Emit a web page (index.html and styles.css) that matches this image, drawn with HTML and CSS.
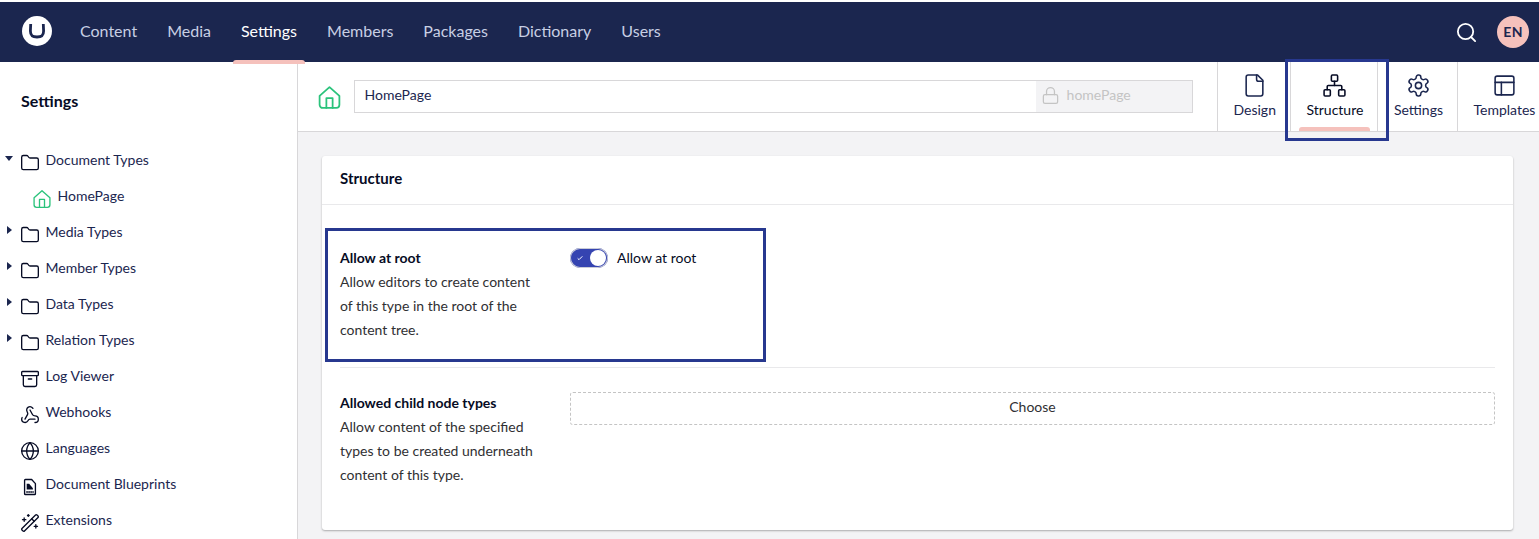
FILE: index.html
```html
<!DOCTYPE html>
<html lang="en">
<head>
<meta charset="utf-8">
<title>Settings</title>
<link rel="stylesheet" href="styles.css">
</head>
<body>
<svg class="sprite" aria-hidden="true">
  <symbol id="i-folder" viewBox="0 0 24 24"><path d="M20 20a2 2 0 0 0 2-2V8a2 2 0 0 0-2-2h-7.9a2 2 0 0 1-1.69-.9L9.6 3.9A2 2 0 0 0 7.93 3H4a2 2 0 0 0-2 2v13a2 2 0 0 0 2 2Z"/></symbol>
  <symbol id="i-home" viewBox="0 0 24 24"><path d="M2.500 10.500 12 2l9.500 8.500V19a3 3 0 0 1-3 3h-13a3 3 0 0 1-3-3Z"/><path d="M9 22v-9.500h6V22"/></symbol>
  <symbol id="i-search" viewBox="0 0 24 24"><circle cx="11" cy="11" r="8"/><path d="m21 21-4.300-4.300"/></symbol>
  <symbol id="i-file" viewBox="0 0 24 24"><path d="M15 2H6a2 2 0 0 0-2 2v16a2 2 0 0 0 2 2h12a2 2 0 0 0 2-2V7Z"/><path d="M14 2v4a2 2 0 0 0 2 2h4"/></symbol>
  <symbol id="i-network" viewBox="0 0 24 24"><rect x="9" y="2" width="6" height="6" rx="1"/><rect x="16" y="16" width="6" height="6" rx="1"/><rect x="2" y="16" width="6" height="6" rx="1"/><path d="M5 16v-3a1 1 0 0 1 1-1h12a1 1 0 0 1 1 1v3"/><path d="M12 12V8"/></symbol>
  <symbol id="i-gear" viewBox="0 0 24 24"><path d="M12.220 2h-.44a2 2 0 0 0-2 2v.18a2 2 0 0 1-1 1.730l-.43.25a2 2 0 0 1-2 0l-.15-.08a2 2 0 0 0-2.730.73l-.22.38a2 2 0 0 0 .73 2.730l.15.1a2 2 0 0 1 1 1.720v.51a2 2 0 0 1-1 1.740l-.15.09a2 2 0 0 0-.73 2.730l.22.38a2 2 0 0 0 2.730.73l.15-.08a2 2 0 0 1 2 0l.43.25a2 2 0 0 1 1 1.730V20a2 2 0 0 0 2 2h.44a2 2 0 0 0 2-2v-.18a2 2 0 0 1 1-1.730l.43-.25a2 2 0 0 1 2 0l.15.08a2 2 0 0 0 2.730-.73l.22-.39a2 2 0 0 0-.73-2.730l-.15-.08a2 2 0 0 1-1-1.740v-.5a2 2 0 0 1 1-1.740l.15-.09a2 2 0 0 0 .73-2.730l-.22-.38a2 2 0 0 0-2.730-.73l-.15.08a2 2 0 0 1-2 0l-.43-.25a2 2 0 0 1-1-1.730V4a2 2 0 0 0-2-2z"/><circle cx="12" cy="12" r="3"/></symbol>
  <symbol id="i-layout" viewBox="0 0 24 24"><rect x="3" y="3" width="18" height="18" rx="2"/><path d="M3 9h18"/><path d="M9 21V9"/></symbol>
  <symbol id="i-lock" viewBox="0 0 24 24"><rect x="3" y="11" width="18" height="11" rx="2"/><path d="M7 11V7a5 5 0 0 1 10 0v4"/></symbol>
  <symbol id="i-archive" viewBox="0 0 24 24"><rect x="2" y="3" width="20" height="5" rx="1"/><path d="M4 8v11a2 2 0 0 0 2 2h12a2 2 0 0 0 2-2V8"/><path d="M10 12h4"/></symbol>
  <symbol id="i-webhook" viewBox="0 0 24 24"><path d="M18 16.980h-5.990c-1.100 0-1.950.94-2.480 1.900A4 4 0 0 1 2 17c.01-.7.2-1.400.57-2"/><path d="m6 17 3.130-5.780c.53-.97.1-2.180-.5-3.100a4 4 0 1 1 6.890-4.060"/><path d="m12 6 3.130 5.730C15.660 12.700 16.900 13 18 13a4 4 0 0 1 0 8"/></symbol>
  <symbol id="i-globe" viewBox="0 0 24 24"><circle cx="12" cy="12" r="10"/><path d="M12 2a14.500 14.500 0 0 0 0 20 14.500 14.500 0 0 0 0-20"/><path d="M2 12h20"/></symbol>
  <symbol id="i-blueprint" viewBox="0 0 24 24"><path d="M14 3H6.500a1 1 0 0 0-1 1v16a1 1 0 0 0 1 1h11a1 1 0 0 0 1-1V8Z"/><path class="solid" d="M8 8h3l4.500 5.500V15H8Z"/><path d="M8 18h8" stroke-dasharray="1 1.500"/></symbol>
  <symbol id="i-wand" viewBox="0 0 24 24"><path d="m21.640 3.640-1.280-1.280a1.210 1.210 0 0 0-1.720 0L2.360 18.640a1.210 1.210 0 0 0 0 1.720l1.280 1.280a1.200 1.200 0 0 0 1.720 0L21.640 5.360a1.200 1.200 0 0 0 0-1.720"/><path d="m14 7 3 3"/><path d="M5 6v4"/><path d="M19 14v4"/><path d="M10 2v2"/><path d="M7 8H3"/><path d="M21 16h-4"/><path d="M11 3H9"/></symbol>
</svg>

<header class="topbar">
  <div class="logo">
    <svg viewBox="0 0 30 30" class="logo-mark"><circle cx="15" cy="15" r="15" class="logo-disc"/><path d="M8.700 8 8.400 15c0 5 2.400 6 6.600 6s6.600-1 6.600-6L21.300 8" class="logo-u"/></svg>
  </div>
  <nav class="mainnav">
    <a class="mainnav-item">Content</a>
    <a class="mainnav-item">Media</a>
    <a class="mainnav-item is-active">Settings</a>
    <a class="mainnav-item">Members</a>
    <a class="mainnav-item">Packages</a>
    <a class="mainnav-item">Dictionary</a>
    <a class="mainnav-item">Users</a>
  </nav>
  <div class="topbar-tools">
    <svg class="icon icon-search"><use href="#i-search"/></svg>
    <div class="avatar">EN</div>
  </div>
</header>

<div class="shell">
  <aside class="sidebar">
    <h2 class="sidebar-title">Settings</h2>
    <ul class="tree">
      <li class="tree-row"><span class="caret caret-open"></span><svg class="icon tree-icon"><use href="#i-folder"/></svg><span>Document Types</span></li>
      <li class="tree-row tree-child"><svg class="icon tree-icon icon-green"><use href="#i-home"/></svg><span>HomePage</span></li>
      <li class="tree-row"><span class="caret"></span><svg class="icon tree-icon"><use href="#i-folder"/></svg><span>Media Types</span></li>
      <li class="tree-row"><span class="caret"></span><svg class="icon tree-icon"><use href="#i-folder"/></svg><span>Member Types</span></li>
      <li class="tree-row"><span class="caret"></span><svg class="icon tree-icon"><use href="#i-folder"/></svg><span>Data Types</span></li>
      <li class="tree-row"><span class="caret"></span><svg class="icon tree-icon"><use href="#i-folder"/></svg><span>Relation Types</span></li>
      <li class="tree-row"><svg class="icon tree-icon"><use href="#i-archive"/></svg><span>Log Viewer</span></li>
      <li class="tree-row"><svg class="icon tree-icon"><use href="#i-webhook"/></svg><span>Webhooks</span></li>
      <li class="tree-row"><svg class="icon tree-icon"><use href="#i-globe"/></svg><span>Languages</span></li>
      <li class="tree-row"><svg class="icon tree-icon"><use href="#i-blueprint"/></svg><span>Document Blueprints</span></li>
      <li class="tree-row"><svg class="icon tree-icon"><use href="#i-wand"/></svg><span>Extensions</span></li>
    </ul>
  </aside>

  <div class="workspace">
    <div class="ws-header">
      <svg class="icon ws-icon icon-green"><use href="#i-home"/></svg>
      <div class="name-field">
        <span class="name-value">HomePage</span>
        <span class="alias"><svg class="icon alias-lock"><use href="#i-lock"/></svg>homePage</span>
      </div>
      <nav class="tabs">
        <a class="tab"><svg class="icon tab-icon"><use href="#i-file"/></svg>Design</a>
        <a class="tab is-active"><svg class="icon tab-icon"><use href="#i-network"/></svg>Structure<span class="callout callout-tab"></span></a>
        <a class="tab"><svg class="icon tab-icon"><use href="#i-gear"/></svg>Settings</a>
        <a class="tab"><svg class="icon tab-icon"><use href="#i-layout"/></svg>Templates</a>
      </nav>
    </div>

    <main class="ws-main">
      <section class="box">
        <h3 class="box-title">Structure</h3>
        <div class="box-body">
          <div class="prop">
            <div class="prop-label">
              <strong>Allow at root</strong>
              <p>Allow editors to create content of this type in the root of the content tree.</p>
            </div>
            <div class="toggle-wrap">
              <span class="toggle">
                <svg class="toggle-check" viewBox="0 0 24 24"><path d="M5 13l4 4L19 7"/></svg>
                <span class="toggle-knob"></span>
              </span>
              <span>Allow at root</span>
            </div>
            <span class="callout callout-prop"></span>
          </div>
          <div class="prop prop-last">
            <div class="prop-label">
              <strong>Allowed child node types</strong>
              <p>Allow content of the specified types to be created underneath content of this type.</p>
            </div>
            <div class="prop-control">
              <button class="choose">Choose</button>
            </div>
          </div>
        </div>
      </section>
    </main>
  </div>
</div>
</body>
</html>
```

FILE: styles.css
```css
* { box-sizing: border-box; }
html, body { margin: 0; height: 100%; overflow: hidden; }
body {
  padding-top: 2px;
  background: #fff;
  color: #1b264f;
  font: 14px/24px "Lato", "Liberation Sans", sans-serif;
  display: flex;
  flex-direction: column;
  width: 1539px;
  height: 539px;
}
.sprite { position: absolute; width: 0; height: 0; overflow: hidden; }
.icon { display: block; fill: none; stroke: currentColor; stroke-width: 1.75; stroke-linecap: round; stroke-linejoin: round; flex: none; }
.icon-green { color: #2bc37c; }
.solid { fill: currentColor; stroke: none; }

.topbar { height: 60px; flex: none; background: #1b264f; display: flex; align-items: center; padding: 0 10px 0 22px; }
.logo { width: 30px; height: 30px; flex: none; margin-top: -2px; }
.logo-mark { display: block; width: 30px; height: 30px; }
.logo-disc { fill: #fff; }
.logo-u { fill: none; stroke: #1b264f; stroke-width: 2.8; stroke-linecap: butt; }
.mainnav { display: flex; align-self: stretch; margin-left: 13px; }
.mainnav-item { position: relative; display: flex; align-items: center; padding: 0 15px; font-size: 16px; color: #c8cfe4; margin-top: -2px; }
.mainnav-item.is-active { color: #fff; }
.mainnav-item.is-active::after { content: ""; position: absolute; left: 7px; right: 7px; bottom: -2px; height: 4px; background: #f5c1bc; border-radius: 3px 3px 0 0; }
.topbar-tools { margin-left: auto; display: flex; align-items: center; gap: 19px; }
.icon-search { width: 23px; height: 23px; color: #fff; stroke-width: 1.9; margin-top: 1px; }
.avatar { width: 32px; height: 32px; border-radius: 50%; background: #f5c1bc; display: flex; align-items: center; justify-content: center; font-size: 14px; font-weight: 700; letter-spacing: .3px; color: #1b264f; }

.shell { flex: 1; display: flex; min-height: 0; }
.sidebar { width: 298px; flex: none; border-right: 1px solid #d8d7d9; overflow: hidden; }
.sidebar-title { margin: 0; padding: 27px 0 0 21px; font-size: 16px; line-height: 24px; font-weight: 700; color: #060b24; height: 80px; }
.tree { list-style: none; margin: 0; padding: 0; }
.tree-row { position: relative; height: 36px; display: flex; align-items: center; padding-left: 45.500px; color: #1b264f; }
.tree-child { padding-left: 57.500px; }
.tree-icon { position: absolute; left: 20px; top: 11px; width: 20px; height: 20px; color: #060b24; stroke-width: 1.6; }
.tree-child .tree-icon { left: 32px; top: 11px; color: #2bc37c; }
.caret { position: absolute; left: 7px; top: 12px; width: 0; height: 0; border-top: 4px solid transparent; border-bottom: 4px solid transparent; border-left: 5px solid #1b264f; }
.caret-open { left: 5px; top: 14px; border-left: 4px solid transparent; border-right: 4px solid transparent; border-top: 5px solid #1b264f; border-bottom: 0; }

.workspace { flex: 1; min-width: 0; display: flex; flex-direction: column; background: #f3f3f5; }
.ws-header { height: 70px; flex: none; display: flex; align-items: stretch; background: #fff; border-bottom: 1px solid #d8d7d9; padding-left: 18.500px; }
.ws-icon { width: 25px; height: 25px; align-self: center; margin-top: 1px; stroke-width: 1.7; }
.name-field { width: 839px; height: 33px; margin: 18px 0 0 12.500px; border: 1px solid #d8d7d9; display: flex; align-items: center; justify-content: space-between; flex: none; }
.name-value { padding: 0 0 3px 9.500px; }
.alias { width: 156px; align-self: stretch; background: #f3f3f5; display: flex; align-items: center; gap: 7px; padding: 0 0 3px 4.600px; color: #c4c4c4; }
.alias-lock { width: 19px; height: 19px; stroke-width: 1.6; margin-top: 1px; }
.tabs { display: flex; margin-left: 24px; flex: none; }
.tab { position: relative; display: flex; flex-direction: column; align-items: center; padding: 11px 14px 0 15.500px; border-left: 1px solid #d8d7d9; color: #1b264f; line-height: 24px; }
.tab-icon { width: 25px; height: 25px; stroke-width: 1.5; }
.tab.is-active { color: #060b24; }
.tab.is-active::after { content: ""; position: absolute; left: 8px; right: 7px; bottom: 0; height: 4px; background: #f5c1bc; border-radius: 3px 3px 0 0; }

.ws-main { flex: 1; min-height: 0; padding: 24px 26px 0 24px; overflow: hidden; }
.box { background: #fff; border-radius: 3px; box-shadow: 0 1px 2px rgba(0, 0, 0, .3); }
.box-title { margin: 0; height: 49px; padding: 10px 18px 0; border-bottom: 1px solid #e9e9eb; font-size: 15px; line-height: 24px; font-weight: 700; color: #060b24; }
.box-body { padding: 17px 18px 18px; }
.prop { position: relative; display: flex; padding: 24px 0 25px; border-bottom: 1px solid #e9e9eb; }
.prop-last { padding: 23px 0 25px; border-bottom: 0; }
.prop-label { width: 230px; flex: none; padding-right: 30px; color: #303033; }
.prop-label strong { display: block; font-weight: 700; color: #060b24; }
.prop-label p { margin: 0; }
.toggle-wrap { display: flex; align-items: center; gap: 9px; height: 24px; color: #060b24; }
.toggle { position: relative; display: block; width: 38px; height: 20px; border-radius: 10px; background: #3544b1; box-shadow: 0 0 0 1px #c9cbd8 inset; }
.toggle-check { position: absolute; left: 6px; top: 6px; width: 8px; height: 8px; fill: none; stroke: #fff; stroke-width: 3; }
.toggle-knob { position: absolute; right: 2px; top: 2px; width: 16px; height: 16px; border-radius: 50%; background: #fff; }
.prop-control { flex: 1; }
.choose { display: block; width: 100%; height: 33px; padding: 0 0 3px; margin-top: 1px; background: #fff; border: 1px dashed #c4c4c4; border-radius: 3px; font: inherit; color: #303033; }
.callout { position: absolute; border: 3px solid #27388f; pointer-events: none; z-index: 2; }
.callout-prop { left: -15px; top: 6px; width: 441px; height: 134px; }
.callout-tab { left: -6px; top: -3px; width: 104px; height: 82px; }
```
